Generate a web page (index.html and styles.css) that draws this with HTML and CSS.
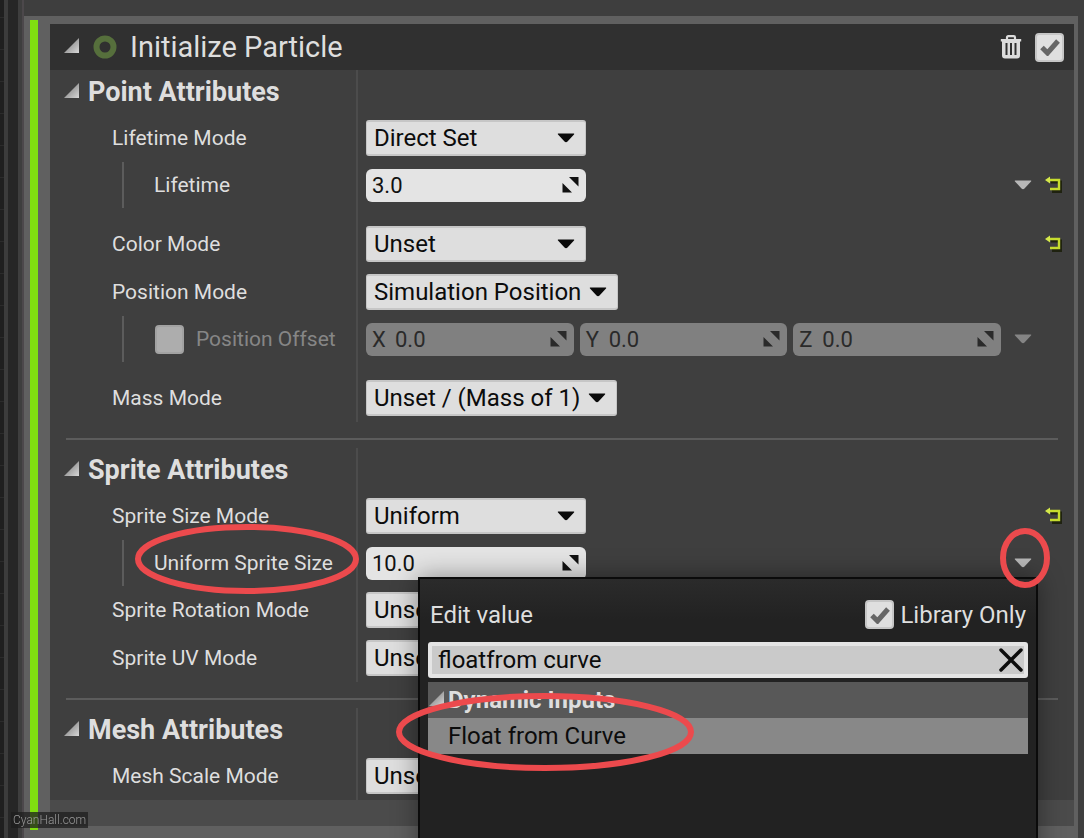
FILE: index.html
```html
<!DOCTYPE html>
<html lang="en">
<head>
<meta charset="utf-8">
<title>Initialize Particle</title>
<link rel="stylesheet" href="styles.css">
</head>
<body>
<svg class="defs" width="0" height="0" aria-hidden="true">
  <defs>
    <linearGradient id="fade" x1="0" y1="0" x2="1" y2="1"><stop offset=".3" stop-color="#8c8c8c"/><stop offset="1" stop-color="#d8d8d8"/></linearGradient>
    <symbol id="fold" viewBox="0 0 15 18"><path d="M15 0V15H0Z" fill="url(#fade)"/></symbol>
    <symbol id="caret" viewBox="0 0 18 10"><path d="M1 0.500H17Q17.500 1 17 1.500L10.500 8.500Q9 10 7.500 8.500L1 1.500Q.5 1 1 .5Z" fill="currentColor"/></symbol>
    <symbol id="drag" viewBox="0 0 17 16"><path d="M7 0H16.500V9.500Z M.5 6L10 15.500H.5Z" fill="currentColor"/></symbol>
    <symbol id="revert" viewBox="0 0 18 18"><path d="M6 5H15.500V14.500H7" fill="none" stroke="#1f2210" stroke-width="3" transform="translate(1 1)"/><path d="M4 4H15V13H6" fill="none" stroke="#c6dc2e" stroke-width="2.400"/><path d="M1 4L6 .5V7.500Z" fill="#d4e84a"/></symbol>
    <symbol id="tick" viewBox="0 0 20 18"><path d="M2 9.500L7.500 15L18 3" fill="none" stroke="#666" stroke-width="5"/></symbol>
  </defs>
</svg>
<div class="app">
  <div class="gutter"></div>
  <main class="stage">
    <article class="module">
      <div class="accent"></div>
      <div class="module-body">
        <header class="title-bar">
          <button class="icon-button" aria-label="Collapse module"><svg width="15" height="18"><use href="#fold"/></svg></button>
          <svg class="status" width="24" height="24" viewBox="0 0 24 24"><circle cx="12" cy="12" r="8.500" fill="none" stroke="#566f3c" stroke-width="6"/></svg>
          <h1>Initialize Particle</h1>
          <button class="icon-button" aria-label="Delete module">
            <svg width="22" height="24" viewBox="0 0 22 24"><path d="M7 4V2.500Q7 1.200 8.300 1.200H13.700Q15 1.200 15 2.500V4" fill="none" stroke="#dcdcdc" stroke-width="2.200"/><path d="M.8 4H21.200V6.500H.8Z" fill="#dcdcdc"/><path fill-rule="evenodd" d="M2 6H20V20.500Q20 23.500 17 23.500H5Q2 23.500 2 20.500ZM5.500 8V20H7.500V8ZM10 8V20H12V8ZM14.500 8V20H16.500V8Z" fill="#dcdcdc"/></svg>
          </button>
          <span class="check"><input type="checkbox" checked aria-label="Module enabled"><svg width="20" height="18"><use href="#tick"/></svg></span>
        </header>

        <section class="group">
          <div class="row heading"><div class="cell"><button class="icon-button" aria-label="Collapse Point Attributes"><svg width="15" height="18"><use href="#fold"/></svg></button><h2>Point Attributes</h2></div></div>
          <div class="row">
            <div class="cell"><label for="life-mode">Lifetime Mode</label></div>
            <div class="value"><span class="combo"><select id="life-mode"><option>Direct Set</option></select><svg width="18" height="10"><use href="#caret"/></svg></span></div>
            <div class="actions"></div>
          </div>
          <div class="row nested">
            <div class="cell"><div class="branch"><label for="life">Lifetime</label></div></div>
            <div class="value"><span class="spin"><input id="life" type="text" value="3.0"><svg width="17" height="16"><use href="#drag"/></svg></span></div>
            <div class="actions"><button class="icon-button more" aria-label="Edit Lifetime"><svg width="18" height="10"><use href="#caret"/></svg></button><button class="icon-button reset" aria-label="Reset Lifetime"><svg width="18" height="18"><use href="#revert"/></svg></button></div>
          </div>
          <div class="row spaced">
            <div class="cell"><label for="color-mode">Color Mode</label></div>
            <div class="value"><span class="combo"><select id="color-mode"><option>Unset</option></select><svg width="18" height="10"><use href="#caret"/></svg></span></div>
            <div class="actions"><button class="icon-button reset" aria-label="Reset Color Mode"><svg width="18" height="18"><use href="#revert"/></svg></button></div>
          </div>
          <div class="row">
            <div class="cell"><label for="pos-mode">Position Mode</label></div>
            <div class="value"><span class="combo"><select id="pos-mode"><option>Simulation Position</option></select><svg width="18" height="10"><use href="#caret"/></svg></span></div>
            <div class="actions"></div>
          </div>
          <div class="row nested off">
            <div class="cell"><div class="branch"><span class="check"><input type="checkbox" id="offset"></span><label for="offset">Position Offset</label></div></div>
            <div class="value vector">
              <span class="spin"><label for="ox">X</label><input id="ox" type="text" value="0.0" disabled><svg width="17" height="16"><use href="#drag"/></svg></span>
              <span class="spin"><label for="oy">Y</label><input id="oy" type="text" value="0.0" disabled><svg width="17" height="16"><use href="#drag"/></svg></span>
              <span class="spin"><label for="oz">Z</label><input id="oz" type="text" value="0.0" disabled><svg width="17" height="16"><use href="#drag"/></svg></span>
            </div>
            <div class="actions"><button class="icon-button more" aria-label="Edit Position Offset"><svg width="18" height="10"><use href="#caret"/></svg></button></div>
          </div>
          <div class="row spaced">
            <div class="cell"><label for="mass-mode">Mass Mode</label></div>
            <div class="value"><span class="combo"><select id="mass-mode"><option>Unset / (Mass of 1)</option></select><svg width="18" height="10"><use href="#caret"/></svg></span></div>
            <div class="actions"></div>
          </div>
        </section>
        <hr>
        <section class="group">
          <div class="row heading"><div class="cell"><button class="icon-button" aria-label="Collapse Sprite Attributes"><svg width="15" height="18"><use href="#fold"/></svg></button><h2>Sprite Attributes</h2></div></div>
          <div class="row">
            <div class="cell"><label for="size-mode">Sprite Size Mode</label></div>
            <div class="value"><span class="combo"><select id="size-mode"><option>Uniform</option></select><svg width="18" height="10"><use href="#caret"/></svg></span></div>
            <div class="actions"><button class="icon-button reset" aria-label="Reset Sprite Size Mode"><svg width="18" height="18"><use href="#revert"/></svg></button></div>
          </div>
          <div class="row nested anchor">
            <div class="cell"><div class="branch"><label for="size" class="anchor">Uniform Sprite Size<svg class="mark mark-label" viewBox="0 0 226 72"><ellipse cx="113" cy="36" rx="109" ry="32"/></svg></label></div></div>
            <div class="value"><span class="spin"><input id="size" type="text" value="10.0"><svg width="17" height="16"><use href="#drag"/></svg></span></div>
            <div class="actions"><button class="icon-button more anchor" aria-label="Edit Uniform Sprite Size"><svg width="18" height="10"><use href="#caret"/></svg><svg class="mark mark-arrow" viewBox="0 0 50 60"><ellipse cx="25" cy="30" rx="22" ry="27"/></svg></button></div>

            <div class="popup">
              <div class="popup-head">
                <span>Edit value</span>
                <label class="library"><span class="check"><input type="checkbox" checked><svg width="20" height="18"><use href="#tick"/></svg></span>Library Only</label>
              </div>
              <div class="search">
                <input type="text" value="floatfrom curve" aria-label="Search inputs">
                <button class="icon-button" aria-label="Clear search"><svg width="24" height="24" viewBox="0 0 24 24"><path d="M2 2L22 22M22 2L2 22" stroke="#0c0c0c" stroke-width="3.500" stroke-linecap="round"/></svg></button>
              </div>
              <div class="menu-group"><svg width="15" height="18"><use href="#fold"/></svg>Dynamic Inputs</div>
              <button class="menu-item">Float from Curve</button>
              <svg class="mark mark-item" viewBox="0 0 298 80"><ellipse cx="149" cy="40" rx="146" ry="36"/></svg>
            </div>
          </div>
          <div class="row">
            <div class="cell"><label for="rot-mode">Sprite Rotation Mode</label></div>
            <div class="value"><span class="combo"><select id="rot-mode"><option>Unset</option></select><svg width="18" height="10"><use href="#caret"/></svg></span></div>
            <div class="actions"></div>
          </div>
          <div class="row">
            <div class="cell"><label for="uv-mode">Sprite UV Mode</label></div>
            <div class="value"><span class="combo"><select id="uv-mode"><option>Unset</option></select><svg width="18" height="10"><use href="#caret"/></svg></span></div>
            <div class="actions"></div>
          </div>
        </section>
        <hr>
        <section class="group">
          <div class="row heading"><div class="cell"><button class="icon-button" aria-label="Collapse Mesh Attributes"><svg width="15" height="18"><use href="#fold"/></svg></button><h2>Mesh Attributes</h2></div></div>
          <div class="row">
            <div class="cell"><label for="mesh-mode">Mesh Scale Mode</label></div>
            <div class="value"><span class="combo"><select id="mesh-mode"><option>Unset</option></select><svg width="18" height="10"><use href="#caret"/></svg></span></div>
            <div class="actions"></div>
          </div>
        </section>
        <footer class="module-foot"></footer>
      </div>
    </article>
  </main>
</div>
<div class="watermark">CyanHall.com</div>
</body>
</html>
```

FILE: styles.css
```css
* { box-sizing: border-box; }

body {
  margin: 0;
  height: 100vh;
  overflow: hidden;
  background: #3e3e3e;
  color: #dedede;
  font-family: Roboto, "Liberation Sans", sans-serif;
}

h1, h2 { margin: 0; }
svg { display: block; flex: none; }
.defs { position: absolute; }
.anchor { position: relative; }

.app { display: flex; min-height: 100vh; }

.gutter {
  flex: none;
  width: 24px;
  background:
    linear-gradient(90deg, transparent 4px, #3c3c3c 4px 8px, #262626 8px 18px, #3e3e3e 18px 22px, #4c484b 22px),
    repeating-linear-gradient(#1f1f1f 0 17px, #2b2b2b 17px 18px, #1f1f1f 18px 32px);
}

.stage { flex: 1; min-width: 0; padding: 16px 6px 0 0; }

.module {
  display: flex;
  gap: 12px;
  padding: 4px 4px 12px 6px;
  background: #606060;
}

.accent { flex: none; width: 8px; margin-bottom: -4px; background: #80de10; }

.module-body { flex: 1; min-width: 0; margin-top: 4px; background: #3f3f3f; }

.title-bar {
  display: flex;
  align-items: center;
  height: 46px;
  padding: 0 10px 0 14px;
  background: #303030;
}
.title-bar h1 { flex: 1; margin-left: 13px; font-size: 29px; font-weight: 400; line-height: 32px; }
.title-bar .status { margin-left: 14px; }
.title-bar .check { margin-left: 13px; }

.icon-button {
  display: block;
  flex: none;
  padding: 0;
  border: 0;
  background: none;
  color: inherit;
  font: inherit;
}

.check { display: inline-grid; place-items: center; flex: none; }
.check > * { grid-area: 1 / 1; pointer-events: none; }
.check input {
  appearance: none;
  width: 29px;
  height: 29px;
  margin: 0;
  border: 2px solid #c6c6c6;
  border-radius: 4px;
  background: #dfdfdf;
  pointer-events: auto;
}

.row {
  display: grid;
  grid-template-columns: 308px minmax(0, 1fr) auto;
  min-height: 48px;
}
.row.heading { min-height: 44px; }
.row.nested { min-height: 46px; }
.row.spaced { min-height: 60px; }
.row.spaced > * { padding-top: 12px; }

.cell {
  display: flex;
  align-items: center;
  padding-left: 62px;
  border-right: 2px solid #4c4c4c;
  font-size: 21px;
  line-height: 24px;
  white-space: nowrap;
}
.heading .cell { gap: 9px; padding-left: 14px; }
.heading h2 { font-size: 27px; font-weight: 700; line-height: 32px; }
.nested .cell { padding-left: 72px; }
.branch {
  display: flex;
  align-items: center;
  align-self: stretch;
  gap: 12px;
  padding-left: 30px;
  border-left: 2px solid #5c5c5c;
}

.value { display: flex; align-items: center; padding-left: 8px; }

.combo { display: inline-grid; align-items: center; min-width: 220px; }
.combo > * { grid-area: 1 / 1; }
.combo svg { justify-self: end; margin-right: 11px; color: #0a0a0a; pointer-events: none; }
.combo select {
  appearance: none;
  height: 36px;
  padding: 0 35px 0 7px;
  border: 2px solid #c6c6c6;
  border-left-width: 1px;
  border-right-width: 1px;
  border-radius: 3px;
  background: #dedede;
  color: #0c0c0c;
  font: 24px Roboto, "Liberation Sans", sans-serif;
}

.spin {
  display: inline-flex;
  align-items: center;
  width: 220px;
  height: 33px;
  padding: 0 7px 0 6px;
  border-radius: 6px;
  background: #e4e4e4;
  color: #111;
  font-size: 22px;
}
.spin input {
  flex: 1;
  min-width: 0;
  padding: 0;
  border: 0;
  background: none;
  color: inherit;
  font: inherit;
}
.spin label { width: 23px; }

.vector { gap: 6px; padding-right: 13px; }
.vector .spin { flex: 1; width: auto; min-width: 0; background: #808080; color: #2a2a2a; }
.off .cell { color: #868686; }
.off .branch { padding-left: 31px; }
.off .check input { border-color: #a2a2a2; background: #adadad; }
.off .more { color: #858585; }

.actions {
  display: grid;
  grid-template-columns: 18px 18px;
  align-items: center;
  gap: 12px;
  padding-right: 12px;
}
.more { color: #b8b8b8; }
.reset { grid-column: 2; }

hr { height: 2px; margin: 16px 16px 8px; border: 0; background: #5c5c5c; }

.module-foot { height: 26px; background: #4b4b4b; }

.popup {
  position: absolute;
  z-index: 5;
  top: 37px;
  right: 36px;
  width: 620px;
  height: 300px;
  padding: 8px;
  border: 2px solid #0b0b0b;
  background: linear-gradient(#2b2b2b, #222 40px);
  box-shadow: 0 0 24px rgba(0, 0, 0, .4);
  font-size: 24px;
  line-height: 28px;
}
.popup-head {
  display: flex;
  align-items: center;
  justify-content: space-between;
  height: 55px;
  padding: 0 2px;
}
.library { display: flex; align-items: center; gap: 6px; }
.search {
  display: flex;
  align-items: center;
  height: 36px;
  margin-bottom: 4px;
  padding: 0 1px 0 6px;
  border: 4px solid #e4e4e4;
  border-radius: 3px;
  background: #cacaca;
}
.search input {
  flex: 1;
  min-width: 0;
  padding: 0;
  border: 0;
  background: none;
  color: #0c0c0c;
  font: inherit;
}
.menu-group {
  display: flex;
  align-items: center;
  gap: 4px;
  height: 36px;
  padding-left: 1px;
  background: #585858;
  font-weight: 700;
}
.menu-item {
  display: block;
  width: 100%;
  height: 36px;
  padding: 0 20px;
  border: 0;
  background: #888;
  color: #0c0c0c;
  font: inherit;
  text-align: left;
}

.mark { position: absolute; z-index: 10; pointer-events: none; }
.mark ellipse { fill: none; stroke: #ec4a4d; stroke-width: 6; }
.mark-label { top: -28px; left: -20px; width: 226px; height: 72px; }
.mark-arrow { top: -30px; left: -14px; width: 50px; height: 60px; }
.mark-item { top: 113px; left: -24px; width: 298px; height: 80px; }

.watermark {
  position: fixed;
  z-index: 20;
  bottom: 10px;
  left: 11px;
  padding: 0 2px;
  background: rgba(30, 30, 30, .75);
  color: #999;
  font-size: 12px;
  font-weight: 300;
  line-height: 16px;
}
```
